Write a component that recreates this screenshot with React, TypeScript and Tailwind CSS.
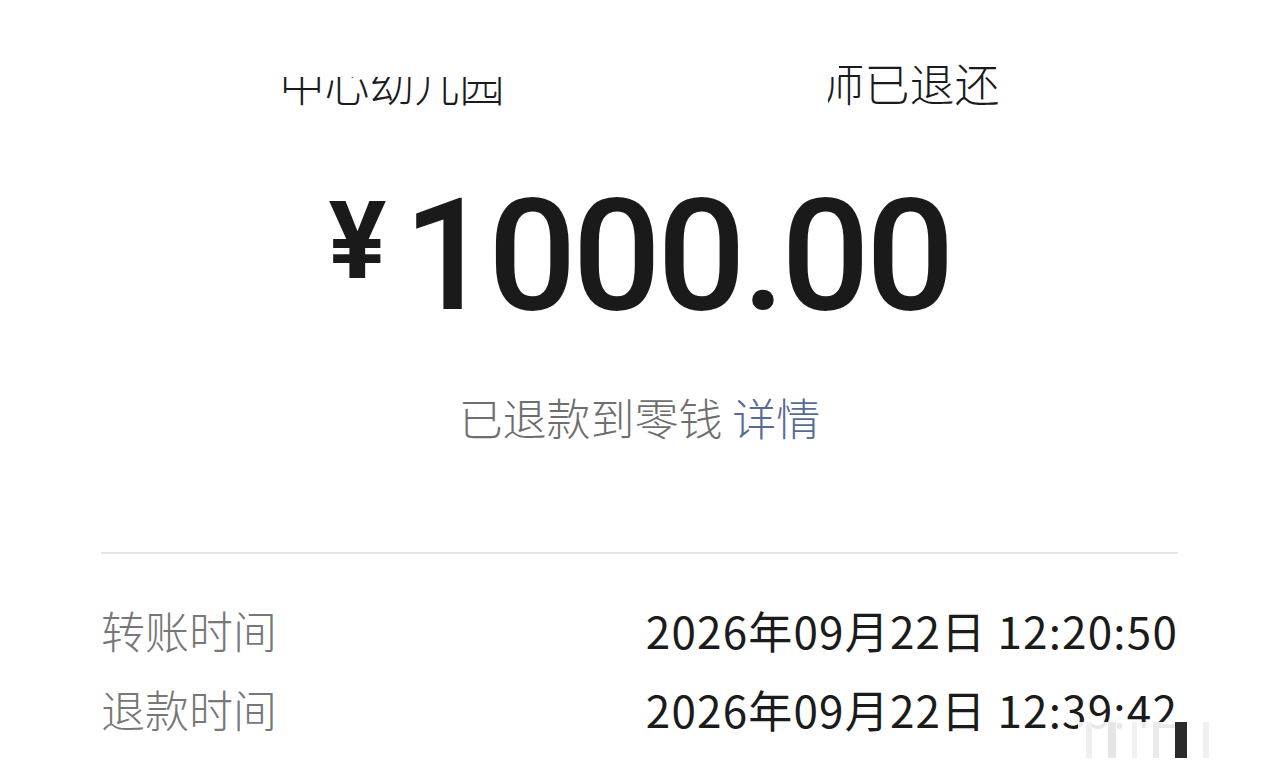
export default function App() {
  const rows = [
    { label: '转账时间', value: '2026年09月22日 12:20:50' },
    { label: '退款时间', value: '2026年09月22日 12:39:42' },
  ];

  return (
    <div className="relative w-[1279px] h-[775px] overflow-hidden bg-white font-['Noto_Sans_CJK_SC',sans-serif] font-light">
      {/* payer line, partly masked in the original capture */}
      <div className="pt-[55px] text-center text-[45px] leading-[56px] text-[#1b1b1b]">
        <span className="relative inline-block">
          <span>中心幼儿园</span>
          <span className="relative">
            大一班张某某老
            <span className="absolute inset-y-0 left-0 -right-[8px] bg-white" />
          </span>
          <span>师已退还</span>
          <span className="absolute left-0 top-0 h-[22px] w-[560px] bg-white" />
        </span>
      </div>

      <div className="mt-[88px] flex justify-center items-start text-[#1a1a1a]">
        <span className="-mt-[8px] mr-[17px] font-['Roboto',sans-serif] font-bold text-[108px] leading-[100px]">¥</span>
        <span className="font-['Roboto',sans-serif] font-medium text-[156px] leading-[114px] tracking-[-4px]">1000.00</span>
      </div>

      <div className="mt-[76px] text-center text-[44px] leading-[56px] text-[#6e6e6e]">
        已退款到零钱 <span className="text-[#576b95]">详情</span>
      </div>

      <div className="mx-[101px] mt-[107px] h-[2px] bg-[#e6e6e6]" />

      <div className="px-[101px] pt-[48px] flex flex-col gap-[23px]">
        {rows.map((r) => (
          <div key={r.label} className="flex justify-between items-center text-[44px] leading-[56px]">
            <span className="text-[#777777]">{r.label}</span>
            <span className="text-[#1b1b1b] font-normal tracking-[1.2px]">{r.value}</span>
          </div>
        ))}
      </div>

      {/* watermark over the lower right corner */}
      <div className="absolute left-[1078px] top-[722px] w-[192px] h-[36px] bg-white/90 flex items-stretch gap-[16px] px-[8px]">
        <span className="w-[6px] bg-[#efefef]" />
        <span className="w-[8px] bg-[#e6e6e6]" />
        <span className="w-[5px] bg-[#f1f1f1]" />
        <span className="w-[6px] bg-[#eaeaea]" />
        <span className="w-[12px] bg-[#2a2a2a]" />
        <span className="w-[6px] bg-[#f0f0f0]" />
      </div>
    </div>
  );
}
